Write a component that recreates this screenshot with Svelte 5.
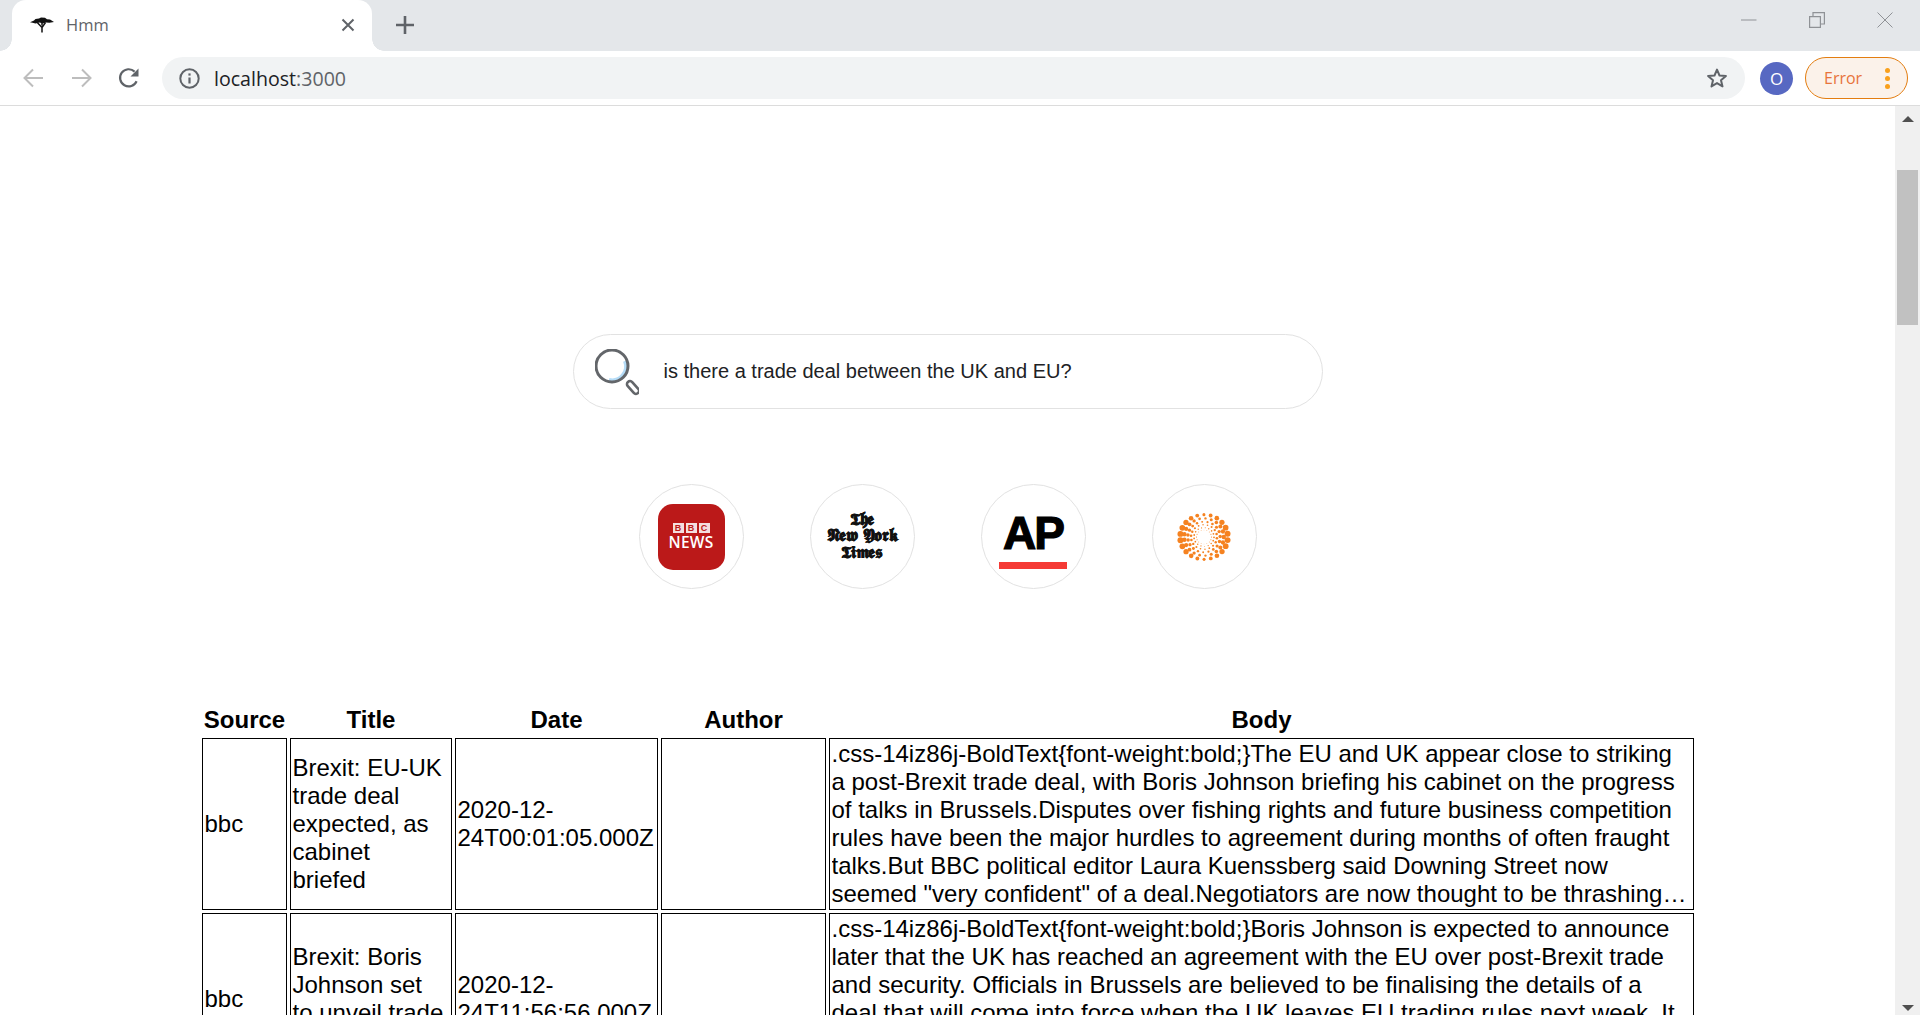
<script>
  const rows = [
    {
      source: 'bbc',
      title: 'Brexit: EU-UK trade deal expected, as cabinet briefed',
      date: '2020-12-24T00:01:05.000Z',
      author: '',
      body: '.css-14iz86j-BoldText{font-weight:bold;}The EU and UK appear close to striking a post-Brexit trade deal, with Boris Johnson briefing his cabinet on the progress of talks in Brussels.Disputes over fishing rights and future business competition rules have been the major hurdles to agreement during months of often fraught talks.But BBC political editor Laura Kuenssberg said Downing Street now seemed "very confident" of a deal.Negotiators are now thought to be thrashing out the final details of the text before it is published.'
    },
    {
      source: 'bbc',
      title: 'Brexit: Boris Johnson set to\u00a0unveil trade deal',
      date: '2020-12-24T11:56:56.000Z',
      author: '',
      body: '.css-14iz86j-BoldText{font-weight:bold;}Boris Johnson is expected to announce later that the UK has reached an agreement with the EU over post-Brexit trade and security. Officials in Brussels are believed to be finalising the details of a deal that will come into force when the UK leaves EU trading rules next week. It would mean no tariffs on goods crossing between the two sides from January, though checks at the border are still expected.'
    }
  ]

  // rings of the thomson reuters mark, big at the sides and small at top and bottom
  const rings = [
    { r: 7.5, n: 16, size: 0.55, turn: 0 },
    { r: 10, n: 17, size: 0.9, turn: 0.4 },
    { r: 13, n: 18, size: 1.3, turn: 0.1 },
    { r: 16.2, n: 19, size: 1.75, turn: 0.3 },
    { r: 19.8, n: 21, size: 2.2, turn: 0 },
    { r: 23.8, n: 22, size: 3, turn: 0.14 }
  ]
  const dots = []
  for (const ring of rings) {
    for (let i = 0; i < ring.n; i++) {
      const a = (i / ring.n) * Math.PI * 2 + ring.turn
      dots.push({
        x: 30 + Math.cos(a) * ring.r,
        y: 30 + Math.sin(a) * ring.r * 0.94,
        r: ring.size * (0.5 + 0.5 * Math.abs(Math.cos(a)))
      })
    }
  }
</script>

<div class="chrome">
  <div class="strip">
    <div class="edge"></div>
    <div class="tab">
      <svg class="favicon" width="26" height="18" viewBox="0 0 26 18">
        <path d="M1 6.2 L5 4.6 L6.5 3 L10 2.6 L12 1.4 L16 1.8 L18 3.2 L21 3.6 L25 6 L20.5 6.8 L17 6.4 L14 7.4 L10.5 6.6 L6.5 7.6 L3.5 6.8 Z" fill="#111" />
        <path d="M13 16.5 V11.5 L8.5 6.8 M13 11.5 L16.5 6.6 M13 9.5 V7" stroke="#111" stroke-width="1.5" fill="none" />
      </svg>
      <span class="tab-title">Hmm</span>
      <svg class="tab-close" width="14" height="14" viewBox="0 0 14 14">
        <path d="M1.5 1.5 L12.5 12.5 M12.5 1.5 L1.5 12.5" stroke="#5f6368" stroke-width="2" />
      </svg>
    </div>
    <svg class="plus" width="18" height="18" viewBox="0 0 18 18">
      <path d="M9 0 V18 M0 9 H18" stroke="#5f6368" stroke-width="2.6" />
    </svg>
    <div class="win">
      <svg width="16" height="16" viewBox="0 0 16 16"><path d="M0 8 H15.5" stroke="#8f9296" stroke-width="1" /></svg>
      <svg width="16" height="16" viewBox="0 0 16 16" fill="none" stroke="#8f9296" stroke-width="1.2"><path d="M0.6 4.6 H11.4 V15.4 H0.6 Z M4 4.6 V0.6 H15.4 V12 H11.4" /></svg>
      <svg width="16" height="16" viewBox="0 0 16 16"><path d="M0.5 0.5 L15.5 15.5 M15.5 0.5 L0.5 15.5" stroke="#8f9296" stroke-width="1" /></svg>
    </div>
  </div>
  <div class="toolbar">
    <svg class="nav" width="20" height="20" viewBox="0 0 20 20" fill="none" stroke="#bdbdbd" stroke-width="2"><path d="M20 10 H1.5 M10 1.5 L1.5 10 L10 18.5" /></svg>
    <svg class="nav" width="20" height="20" viewBox="0 0 20 20" fill="none" stroke="#bdbdbd" stroke-width="2"><path d="M0 10 H18.5 M10 1.5 L18.5 10 L10 18.5" /></svg>
    <svg class="nav" width="22" height="22" viewBox="0 0 22 22" fill="none"><path d="M18.6 14.2 A8.6 8.6 0 1 1 16.6 4.6" stroke="#5f6368" stroke-width="2.2" /><path d="M20.5 1.5 V9.5 H12.5 Z" fill="#5f6368" /></svg>
    <div class="omnibox">
      <svg width="21" height="21" viewBox="0 0 21 21" fill="none"><circle cx="10.5" cy="10.5" r="9.2" stroke="#5f6368" stroke-width="2" /><path d="M10.5 9.5 V15.5" stroke="#5f6368" stroke-width="2.2" /><path d="M10.5 5.4 V7.6" stroke="#5f6368" stroke-width="2.2" /></svg>
      <span class="url">localhost<span class="port">:3000</span></span>
      <svg class="star" width="22" height="22" viewBox="0 0 22 22" fill="none"><path d="M11 2.6 L13.5 8.5 L19.9 9 L15 13.2 L16.5 19.4 L11 16.1 L5.5 19.4 L7 13.2 L2.1 9 L8.5 8.5 Z" stroke="#5f6368" stroke-width="2" stroke-linejoin="round" /></svg>
    </div>
    <div class="avatar">O</div>
    <div class="error">
      <span>Error</span>
      <span class="dots"><i></i><i></i><i></i></span>
    </div>
  </div>
</div>

<div class="viewport">
  <main>
    <div class="search">
      <svg width="44" height="48" viewBox="0 0 44 48" fill="none">
        <path d="M30 12 A14 14 0 0 1 14 31" stroke="#b5dcf7" stroke-width="4" />
        <circle cx="17" cy="17" r="16" stroke="#63666a" stroke-width="3" />
        <rect x="35" y="31" width="6" height="15" rx="3" transform="rotate(-42 38 38.5)" stroke="#63666a" stroke-width="2.6" />
      </svg>
      <span>is there a trade deal between the UK and EU?</span>
    </div>

    <div class="logos">
      <div class="logo">
        <div class="bbc">
          <div class="bbc-blocks"><b>B</b><b>B</b><b>C</b></div>
          <div class="bbc-news">NEWS</div>
        </div>
      </div>
      <div class="logo">
        <div class="nyt">
          <div>𝕿𝖍𝖊</div>
          <div>𝕹𝖊𝖜 𝖄𝖔𝖗𝖐</div>
          <div>𝕿𝖎𝖒𝖊𝖘</div>
        </div>
      </div>
      <div class="logo ap">
        <div class="ap-text">AP</div>
        <div class="ap-bar"></div>
      </div>
      <div class="logo">
        <svg width="60" height="60" viewBox="0 0 60 60">
          {#each dots as d}
            <circle cx={d.x} cy={d.y} r={d.r} fill="#f58220" />
          {/each}
        </svg>
      </div>
    </div>

    <div class="table-wrap">
      <table>
        <colgroup>
          <col class="c-source" />
          <col class="c-title" />
          <col class="c-date" />
          <col class="c-author" />
          <col />
        </colgroup>
        <thead>
          <tr>
            <th>Source</th>
            <th>Title</th>
            <th>Date</th>
            <th>Author</th>
            <th>Body</th>
          </tr>
        </thead>
        <tbody>
          {#each rows as row}
            <tr>
              <td>{row.source}</td>
              <td>{row.title}</td>
              <td>{row.date}</td>
              <td>{row.author}</td>
              <td><div class="clamp">{row.body}</div></td>
            </tr>
          {/each}
        </tbody>
      </table>
    </div>
  </main>

  <div class="scrollbar">
    <div class="arrow up"></div>
    <div class="thumb"></div>
    <div class="arrow down"></div>
  </div>
</div>

<style>
  :global(body) {
    margin: 0;
    overflow: hidden;
    background: #fff;
  }

  .chrome {
    height: 106px;
    font-family: "Open Sans", sans-serif;
    box-sizing: border-box;
    border-bottom: 1px solid #dcdcdc;
  }

  .strip {
    height: 51px;
    display: flex;
    align-items: center;
    background: #e4e7ea;
  }

  .edge {
    width: 12px;
  }

  .tab {
    position: relative;
    width: 360px;
    height: 51px;
    box-sizing: border-box;
    padding: 0 17px 0 17px;
    display: flex;
    align-items: center;
    background: #fff;
    border-radius: 14px 14px 0 0;
  }

  .tab::before,
  .tab::after {
    content: "";
    position: absolute;
    bottom: 0;
    width: 12px;
    height: 12px;
  }

  .tab::before {
    left: -12px;
    background: radial-gradient(circle at 0 0, transparent 11.5px, #fff 12px);
  }

  .tab::after {
    right: -12px;
    background: radial-gradient(circle at 100% 0, transparent 11.5px, #fff 12px);
  }

  .favicon {
    flex: none;
    margin-top: -1px;
  }

  .tab-title {
    margin-left: 11px;
    flex: 1;
    font-size: 16.5px;
    color: #5f6368;
    margin-top: -2px;
  }

  .tab-close {
    margin-top: -1px;
  }

  .plus {
    margin-left: 24px;
    margin-top: -1px;
  }

  .win {
    margin-left: auto;
    margin-right: 27px;
    margin-top: -11px;
    display: flex;
    gap: 52px;
  }

  .toolbar {
    height: 54px;
    display: flex;
    align-items: center;
    padding: 0 12px 0 23px;
    box-sizing: border-box;
  }

  .nav {
    flex: none;
    margin-right: 29px;
  }

  .nav:nth-child(2) {
    margin-right: 27px;
  }

  .nav:nth-child(3) {
    margin-right: 0;
    margin-left: -1px;
  }

  .omnibox {
    margin-left: 22px;
    width: 1583px;
    height: 42px;
    box-sizing: border-box;
    padding: 0 17px;
    display: flex;
    align-items: center;
    background: #f1f3f4;
    border-radius: 21px;
  }

  .url {
    margin-left: 14px;
    flex: 1;
    font-size: 19.6px;
    color: #202124;
  }

  .port {
    color: #5f6368;
  }

  .avatar {
    margin-left: 15px;
    width: 33px;
    height: 33px;
    flex: none;
    border-radius: 50%;
    background: #5768c2;
    color: #fff;
    font-size: 17px;
    display: flex;
    align-items: center;
    justify-content: center;
  }

  .error {
    margin-left: 12px;
    flex: none;
    width: 103px;
    height: 42px;
    box-sizing: border-box;
    padding: 0 17px 0 18px;
    display: flex;
    align-items: center;
    justify-content: space-between;
    background: #fbf2ea;
    border: 1.5px solid #e37d10;
    border-radius: 21px;
    color: #e8743b;
    font-size: 16px;
  }

  .dots {
    display: flex;
    flex-direction: column;
    gap: 3px;
  }

  .dots i {
    width: 5px;
    height: 5px;
    border-radius: 50%;
    background: #f9a01b;
  }

  .viewport {
    height: 909px;
    display: flex;
  }

  main {
    flex: 1;
    min-width: 0;
    overflow: hidden;
    font-family: "Liberation Sans", Arial, sans-serif;
    color: #000;
  }

  .search {
    margin: 228px auto 0;
    width: 750px;
    height: 75px;
    box-sizing: border-box;
    padding-left: 21px;
    display: flex;
    align-items: center;
    gap: 25px;
    border: 1px solid #e2e2e2;
    border-radius: 37.5px;
    font-size: 20px;
    color: #202124;
  }

  .search svg {
    flex: none;
    margin-top: 2px;
  }

  .logos {
    margin-top: 75px;
    display: flex;
    justify-content: center;
    gap: 66px;
  }

  .logo {
    width: 105px;
    height: 105px;
    box-sizing: border-box;
    border: 1px solid #e2e2e2;
    border-radius: 50%;
    display: flex;
    flex-direction: column;
    align-items: center;
    justify-content: center;
  }

  .bbc {
    width: 67px;
    height: 66px;
    border-radius: 15px;
    background: #bb1919;
    display: flex;
    flex-direction: column;
    align-items: center;
    justify-content: center;
    color: #fff;
    font-family: "Open Sans", sans-serif;
  }

  .bbc-blocks {
    display: flex;
    gap: 2px;
  }

  .bbc-blocks b {
    width: 11px;
    height: 10px;
    background: #f4dede;
    color: #bb1919;
    font: bold 9px/10px "Liberation Sans", sans-serif;
    text-align: center;
  }

  .bbc-news {
    font-size: 15.5px;
    line-height: 18px;
    font-weight: 600;
    letter-spacing: 0.2px;
  }

  .nyt {
    font-family: "DejaVu Serif", "Liberation Serif", serif;
    font-size: 16.5px;
    font-weight: bold;
    line-height: 16.5px;
    letter-spacing: -0.4px;
    text-align: center;
    color: #111;
    white-space: nowrap;
    -webkit-text-stroke: 0.3px #111;
  }

  .ap {
    gap: 11px;
    padding-top: 10px;
  }

  .ap-text {
    font-size: 46px;
    line-height: 36px;
    font-weight: bold;
    letter-spacing: -2px;
    -webkit-text-stroke: 1.2px #000;
  }

  .ap-bar {
    width: 68px;
    height: 7px;
    background: #f53a35;
  }

  .table-wrap {
    margin-top: 114px;
    padding-left: 199px;
  }

  table {
    width: 1498px;
    table-layout: fixed;
    border-collapse: separate;
    border-spacing: 3px;
    font-size: 24px;
    line-height: 28px;
  }

  .c-source {
    width: 85px;
  }

  .c-title {
    width: 162px;
  }

  .c-date {
    width: 203px;
  }

  .c-author {
    width: 165px;
  }

  th {
    padding: 0 1.5px 1px;
    font-weight: bold;
    text-align: center;
  }

  td {
    padding: 1px 1.5px;
    border: 1px solid #000;
    vertical-align: middle;
    text-align: left;
  }

  .clamp {
    display: -webkit-box;
    -webkit-box-orient: vertical;
    -webkit-line-clamp: 6;
    overflow: hidden;
  }

  .scrollbar {
    width: 25px;
    flex: none;
    display: flex;
    flex-direction: column;
    align-items: center;
    background: #f0f0f0;
    padding: 10px 0 4px;
    box-sizing: border-box;
  }

  .arrow {
    width: 0;
    height: 0;
    border-left: 6px solid transparent;
    border-right: 6px solid transparent;
  }

  .up {
    border-bottom: 6px solid #505050;
  }

  .down {
    margin-top: auto;
    border-top: 6px solid #505050;
  }

  .thumb {
    margin-top: 48px;
    width: 21px;
    height: 155px;
    background: #c1c1c1;
  }
</style>
